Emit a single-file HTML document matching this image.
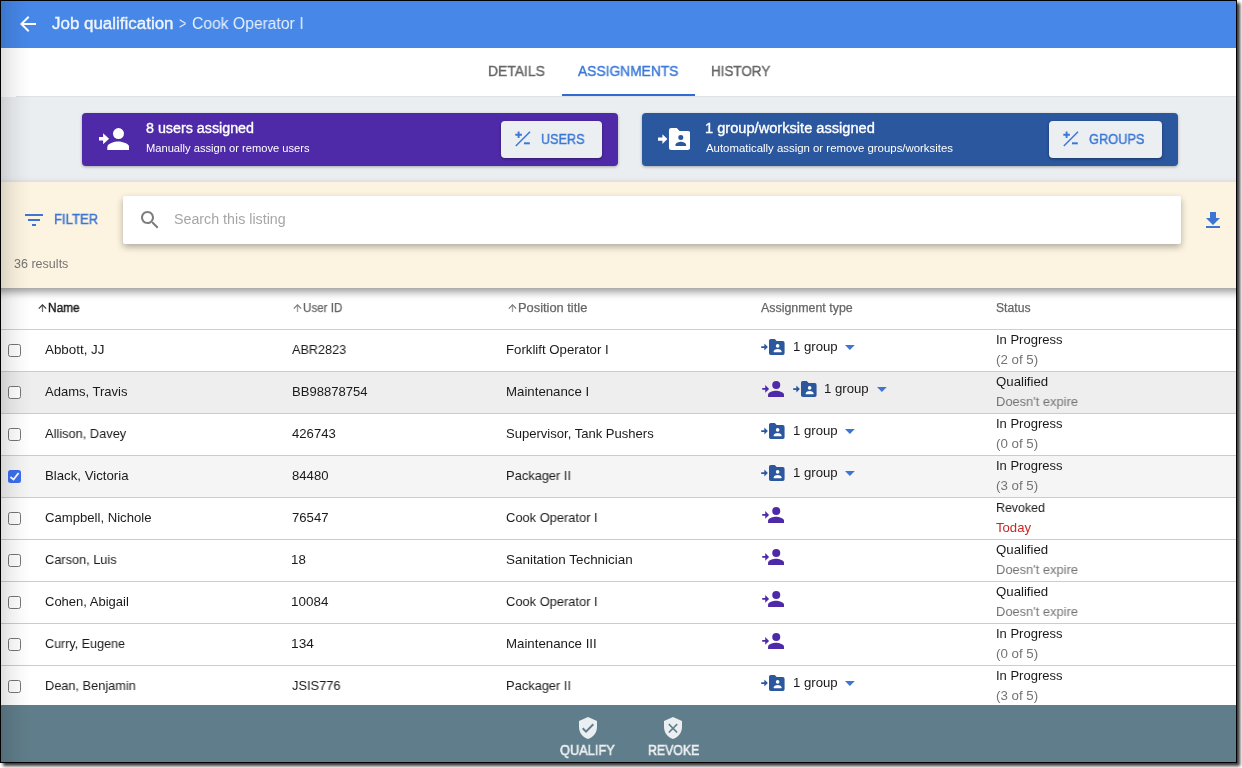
<!DOCTYPE html>
<html><head><meta charset="utf-8"><title>Job qualification</title>
<style>
html,body{margin:0;padding:0;background:#fff;width:1242px;height:768px;overflow:hidden}
body{position:relative;font-family:"Liberation Sans",sans-serif}
.t{position:absolute;white-space:nowrap;margin:0;transform-origin:0 0;will-change:transform}
.r{position:absolute;display:block}
</style></head><body>
<div class="r" style="left:1px;top:1px;width:1235px;height:761px;overflow:hidden"><div class="r" style="left:-1px;top:-1px;width:1242px;height:768px">
<div class="r" style="left:1px;top:1px;width:1235px;height:47px;background:#4687e8;"></div>
<div class="r" style="left:1px;top:48px;width:1235px;height:48px;background:#ffffff;"></div>
<div class="r" style="left:1px;top:96px;width:1235px;height:86px;background:#ebeef0;"></div>
<div class="r" style="left:-20px;top:182px;width:1280px;height:106px;background:#fcf3e0;box-shadow:0 4px 8px rgba(0,0,0,.4);z-index:3"></div>
<svg class="r" style="left:16px;top:12px;" width="24" height="24" viewBox="0 0 24 24"><path fill="#fff" d="M20 11H7.83l5.59-5.59L12 4l-8 8 8 8 1.41-1.41L7.83 13H20v-2z"/></svg>
<div id="h1" class="t" style="left:52px;top:12.00px;font-size:16px;line-height:24px;color:#f0f5fd;font-weight:400;transform:scaleX(1.0588);-webkit-text-stroke:0.35px #f0f5fd;">Job qualification</div>
<div id="h2a" class="t" style="left:179px;top:12.00px;font-size:16px;line-height:24px;color:#e9f0fc;font-weight:400;transform:scaleX(0.7813);">&gt;</div>
<div id="h2" class="t" style="left:191.5px;top:12.00px;font-size:16px;line-height:24px;color:#e9f0fc;font-weight:400;transform:scaleX(0.9795);">Cook Operator I</div>
<div class="r" style="left:1px;top:96px;width:15px;height:1px;background:#ffffff;"></div>
<div class="r" style="left:16px;top:96px;width:1220px;height:1px;background:#dfe1e3;"></div>
<div id="tab1" class="t" style="left:488.4px;top:61.00px;font-size:14px;line-height:21px;color:#666666;font-weight:400;transform:scaleX(0.9911);-webkit-text-stroke:0.4px #666666;">DETAILS</div>
<div id="tab2" class="t" style="left:578.2px;top:61.00px;font-size:14px;line-height:21px;color:#3a78d8;font-weight:400;transform:scaleX(0.9852);-webkit-text-stroke:0.4px #3a78d8;">ASSIGNMENTS</div>
<div id="tab3" class="t" style="left:711.2px;top:61.00px;font-size:14px;line-height:21px;color:#666666;font-weight:400;transform:scaleX(0.9589);-webkit-text-stroke:0.4px #666666;">HISTORY</div>
<div class="r" style="left:562px;top:94px;width:133px;height:2px;background:#2f6bd0;"></div>
<div class="r" style="left:82px;top:113px;width:536px;height:52.5px;background:#4f2aa8;border-radius:4px;box-shadow:0 1px 3px rgba(0,0,0,.3)"></div>
<div class="r" style="left:642px;top:113px;width:536px;height:52.5px;background:#2b579e;border-radius:4px;box-shadow:0 1px 3px rgba(0,0,0,.3)"></div>
<svg class="r" style="left:98.9px;top:127.9px;" width="30.2" height="22.1" viewBox="0 0 30.2 22.1"><g fill="#ffffff"><path d="M0 9h4.1V5.3l6 5.5-6 5.5V12.6H0z"/><circle cx="19.5" cy="5.6" r="5.5"/><path d="M19.25 13.5c-3.66 0-10.95 1.84-10.95 5.5v3.1h21.9V19c0-3.66-7.29-5.500-10.95-5.500z"/></g></svg>
<div id="c1a" class="t" style="left:145.5px;top:118.00px;font-size:14px;line-height:21px;color:#ffffff;font-weight:400;transform:scaleX(1.0204);-webkit-text-stroke:0.35px #ffffff;">8 users assigned</div>
<div id="c1b" class="t" style="left:145.5px;top:140.00px;font-size:11px;line-height:16px;color:#ffffff;font-weight:400;transform:scaleX(1.0130);">Manually assign or remove users</div>
<div class="r" style="left:501px;top:121px;width:101px;height:37px;background:#eceff2;border-radius:4px;box-shadow:0 1px 3px rgba(0,0,0,.4)"></div>
<div id="b1" class="t" style="left:541px;top:129.00px;font-size:14px;line-height:21px;color:#3b77d4;font-weight:400;transform:scaleX(0.9018);-webkit-text-stroke:0.4px #3b77d4;">USERS</div>
<svg class="r" style="left:657.8px;top:127.9px;" width="32.3" height="21.9" viewBox="0 0 32.3 21.9"><g fill="#ffffff"><path d="M0 9.4h4.4V6.200l5 4.850-5 4.850V12.8H0z"/><path d="M13.45 0h5.400l2.600 2.900h8.350a2.500 2.500 0 0 1 2.500 2.500v14a2.500 2.500 0 0 1-2.500 2.500H13.450a2.500 2.500 0 0 1-2.500-2.500V2.500A2.500 2.500 0 0 1 13.450 0z"/></g><g fill="#2b579e"><circle cx="22.8" cy="9.5" r="2.5"/><path d="M17.5 18v-1.200c0-2 3.500-3 5.300-3s5.300 1 5.300 3V18z"/></g></svg>
<div id="c2a" class="t" style="left:705.1px;top:118.00px;font-size:14px;line-height:21px;color:#ffffff;font-weight:400;transform:scaleX(1.0445);-webkit-text-stroke:0.35px #ffffff;">1 group/worksite assigned</div>
<div id="c2b" class="t" style="left:706px;top:140.00px;font-size:11px;line-height:16px;color:#ffffff;font-weight:400;transform:scaleX(1.0359);">Automatically assign or remove groups/worksites</div>
<div class="r" style="left:1049px;top:121px;width:113px;height:37px;background:#eceff2;border-radius:4px;box-shadow:0 1px 3px rgba(0,0,0,.4)"></div>
<div id="b2" class="t" style="left:1089px;top:129.00px;font-size:14px;line-height:21px;color:#3b77d4;font-weight:400;transform:scaleX(0.9145);-webkit-text-stroke:0.4px #3b77d4;">GROUPS</div>
<svg class="r" style="left:514px;top:130px;" width="18" height="18" viewBox="0 0 18 18"><g stroke="#3b77d4" stroke-width="1.7" fill="none"><path stroke-width="1.9" d="M1.3 4.8h6.6M4.6 1.500v6.600"/><path stroke-width="1.5" d="M1.8 16L16 1.700"/><path stroke-width="2" d="M10 13.300h5.800"/></g></svg>
<svg class="r" style="left:1062px;top:130px;" width="18" height="18" viewBox="0 0 18 18"><g stroke="#3b77d4" stroke-width="1.7" fill="none"><path stroke-width="1.9" d="M1.3 4.8h6.6M4.6 1.500v6.600"/><path stroke-width="1.5" d="M1.8 16L16 1.700"/><path stroke-width="2" d="M10 13.300h5.800"/></g></svg>
<div style="position:absolute;z-index:4;left:0;top:0">
<svg class="r" style="left:22px;top:207.5px;" width="24" height="24" viewBox="0 0 24 24"><path fill="#3d75d3" d="M10 18h4v-2h-4v2zM3 6v2h18V6H3zm3 7h12v-2H6v2z"/></svg>
<div id="f1" class="t" style="left:54px;top:209.00px;font-size:14px;line-height:21px;color:#3d75d3;font-weight:400;transform:scaleX(0.9364);-webkit-text-stroke:0.4px #3d75d3;">FILTER</div>
<div class="r" style="left:123px;top:196px;width:1058px;height:47.5px;background:#ffffff;border-radius:2px;box-shadow:0 3px 7px rgba(0,0,0,.3)"></div>
<svg class="r" style="left:137.5px;top:207.5px;" width="24" height="24" viewBox="0 0 24 24"><path fill="#7d7d7d" d="M15.5 14h-.79l-.28-.27C15.41 12.59 16 11.11 16 9.5 16 5.91 13.09 3 9.5 3S3 5.91 3 9.5 5.91 16 9.5 16c1.61 0 3.09-.59 4.23-1.57l.27.28v.79l5 4.99L20.49 19l-4.99-5zm-6 0C7.01 14 5 11.99 5 9.5S7.01 5 9.5 5 14 7.01 14 9.5 11.99 14 9.5 14z"/></svg>
<div id="s1" class="t" style="left:174px;top:209.00px;font-size:14px;line-height:21px;color:#a6a6a6;font-weight:400;transform:scaleX(1.0181);">Search this listing</div>
<svg class="r" style="left:1201px;top:208.5px;" width="24" height="24" viewBox="0 0 24 24"><path fill="#3d75d3" d="M19 9h-4V3H9v6H5l7 7 7-7zM5 17.100v1.900h14v-1.900H5z"/></svg>
<div id="res" class="t" style="left:14.2px;top:255.00px;font-size:12px;line-height:18px;color:#757575;font-weight:400;transform:scaleX(1.0455);">36 results</div>
</div>
<svg class="r" style="left:38.0px;top:303.5px;" width="9" height="9" viewBox="0 0 9 9"><path d="M4.5 1v7" stroke="#333" stroke-width="1.3" stroke-opacity=".7" fill="none"/><path d="M.8 4.6L4.5 .900 8.200 4.600" stroke="#333" stroke-width="1.1" fill="none"/></svg>
<div id="th1" class="t" style="left:48.3px;top:299.00px;font-size:12px;line-height:18px;color:#1a1a1a;font-weight:400;transform:scaleX(0.9870);-webkit-text-stroke:0.4px #1a1a1a;">Name</div>
<svg class="r" style="left:292.5px;top:303.5px;" width="9" height="9" viewBox="0 0 9 9"><path d="M4.5 1v7" stroke="#777" stroke-width="1.3" stroke-opacity=".7" fill="none"/><path d="M.8 4.6L4.5 .900 8.200 4.600" stroke="#777" stroke-width="1.1" fill="none"/></svg>
<div id="th2" class="t" style="left:302.7px;top:299.00px;font-size:12px;line-height:18px;color:#666666;font-weight:400;transform:scaleX(0.9663);-webkit-text-stroke:.25px #666666;">User ID</div>
<svg class="r" style="left:507.5px;top:303.5px;" width="9" height="9" viewBox="0 0 9 9"><path d="M4.5 1v7" stroke="#777" stroke-width="1.3" stroke-opacity=".7" fill="none"/><path d="M.8 4.6L4.5 .900 8.200 4.600" stroke="#777" stroke-width="1.1" fill="none"/></svg>
<div id="th3" class="t" style="left:517.7px;top:299.00px;font-size:12px;line-height:18px;color:#666666;font-weight:400;transform:scaleX(1.0710);-webkit-text-stroke:.25px #666666;">Position title</div>
<div id="th4" class="t" style="left:761px;top:299.00px;font-size:12px;line-height:18px;color:#666666;font-weight:400;transform:scaleX(1.0336);-webkit-text-stroke:.25px #666666;">Assignment type</div>
<div id="th5" class="t" style="left:995.5px;top:299.00px;font-size:12px;line-height:18px;color:#666666;font-weight:400;transform:scaleX(1.0138);-webkit-text-stroke:.25px #666666;">Status</div>
<div class="r" style="left:1px;top:329px;width:1235px;height:1px;background:#cfcfcf;"></div>
<div class="r" style="left:1px;top:371px;width:1235px;height:1px;background:#cccccc;"></div>
<div class="r" style="left:8px;top:344.0px;width:13px;height:13px;box-sizing:border-box;border:1px solid #767676;border-radius:2.5px;background:#fff"></div>
<div id="n0" class="t" style="left:44.8px;top:340.00px;font-size:13px;line-height:20px;color:#1a1a1a;font-weight:400;transform:scaleX(1.0292);">Abbott, JJ</div>
<div id="u0" class="t" style="left:291.5px;top:340.00px;font-size:13px;line-height:20px;color:#1a1a1a;font-weight:400;transform:scaleX(0.9720);">ABR2823</div>
<div id="p0" class="t" style="left:506.3px;top:340.00px;font-size:13px;line-height:20px;color:#1a1a1a;font-weight:400;transform:scaleX(1.0154);">Forklift Operator I</div>
<svg class="r" style="left:761.2px;top:339px;" width="23.58" height="15.99" viewBox="0 0 32.3 21.9"><g fill="#2b579e"><path d="M.3 9.800h4.300V6.200l4.800 4.850-4.800 4.850V12.300H.3z"/><path d="M13.45 0h5.400l2.600 2.900h8.350a2.500 2.500 0 0 1 2.500 2.500v14a2.500 2.500 0 0 1-2.500 2.500H13.450a2.500 2.500 0 0 1-2.500-2.500V2.500A2.500 2.500 0 0 1 13.450 0z"/></g><g fill="#ffffff"><circle cx="22.8" cy="9.5" r="2.5"/><path d="M17.5 18v-1.200c0-2 3.500-3 5.300-3s5.300 1 5.300 3V18z"/></g></svg>
<div id="g0" class="t" style="left:792.6px;top:337.00px;font-size:13px;line-height:20px;color:#1a1a1a;font-weight:400;transform:scaleX(1.0137);">1 group</div>
<svg class="r" style="left:845.4px;top:345px;" width="9.8" height="4.9" viewBox="0 0 10 5"><path fill="#3d75d3" d="M0 0l5 5 5-5z"/></svg>
<div id="sa0" class="t" style="left:996px;top:330.00px;font-size:13px;line-height:20px;color:#1a1a1a;font-weight:400;transform:scaleX(0.9987);">In Progress</div>
<div id="sb0" class="t" style="left:996px;top:350.00px;font-size:13px;line-height:20px;color:#747474;font-weight:400;transform:scaleX(1.0246);">(2 of 5)</div>
<div class="r" style="left:1px;top:372px;width:1235px;height:41px;background:#eeeeee;"></div>
<div class="r" style="left:1px;top:413px;width:1235px;height:1px;background:#cccccc;"></div>
<div class="r" style="left:8px;top:386.0px;width:13px;height:13px;box-sizing:border-box;border:1px solid #767676;border-radius:2.5px;background:#fff"></div>
<div id="n1" class="t" style="left:44.8px;top:382.00px;font-size:13px;line-height:20px;color:#1a1a1a;font-weight:400;transform:scaleX(1.0005);">Adams, Travis</div>
<div id="u1" class="t" style="left:291.5px;top:382.00px;font-size:13px;line-height:20px;color:#1a1a1a;font-weight:400;transform:scaleX(1.0042);">BB98878754</div>
<div id="p1" class="t" style="left:506.3px;top:382.00px;font-size:13px;line-height:20px;color:#1a1a1a;font-weight:400;transform:scaleX(1.0187);">Maintenance I</div>
<svg class="r" style="left:761.8px;top:381px;" width="22.05" height="16.13" viewBox="0 0 30.2 22.1"><g fill="#4f2aa8"><path d="M.3 9.550h4.100V5.600l5.300 5.200-5.300 5.200V12.050H.3z"/><circle cx="19.5" cy="5.6" r="5.5"/><path d="M19.25 13.5c-3.66 0-10.95 1.84-10.95 5.5v3.1h21.9V19c0-3.66-7.29-5.500-10.95-5.500z"/></g></svg>
<svg class="r" style="left:793.1px;top:381px;" width="23.58" height="15.99" viewBox="0 0 32.3 21.9"><g fill="#2b579e"><path d="M.3 9.800h4.300V6.200l4.800 4.850-4.800 4.850V12.300H.3z"/><path d="M13.45 0h5.400l2.600 2.900h8.350a2.500 2.500 0 0 1 2.500 2.500v14a2.500 2.500 0 0 1-2.500 2.500H13.450a2.500 2.500 0 0 1-2.500-2.500V2.500A2.500 2.500 0 0 1 13.450 0z"/></g><g fill="#ffffff"><circle cx="22.8" cy="9.5" r="2.5"/><path d="M17.5 18v-1.200c0-2 3.500-3 5.300-3s5.300 1 5.300 3V18z"/></g></svg>
<div id="g1" class="t" style="left:824.1px;top:379.00px;font-size:13px;line-height:20px;color:#1a1a1a;font-weight:400;transform:scaleX(1.0137);">1 group</div>
<svg class="r" style="left:877.2px;top:387px;" width="9.8" height="4.9" viewBox="0 0 10 5"><path fill="#3d75d3" d="M0 0l5 5 5-5z"/></svg>
<div id="sa1" class="t" style="left:996px;top:372.00px;font-size:13px;line-height:20px;color:#1a1a1a;font-weight:400;transform:scaleX(1.0173);">Qualified</div>
<div id="sb1" class="t" style="left:996px;top:392.00px;font-size:13px;line-height:20px;color:#747474;font-weight:400;transform:scaleX(0.9915);">Doesn't expire</div>
<div class="r" style="left:1px;top:455px;width:1235px;height:1px;background:#cccccc;"></div>
<div class="r" style="left:8px;top:428.0px;width:13px;height:13px;box-sizing:border-box;border:1px solid #767676;border-radius:2.5px;background:#fff"></div>
<div id="n2" class="t" style="left:44.8px;top:424.00px;font-size:13px;line-height:20px;color:#1a1a1a;font-weight:400;transform:scaleX(0.9857);">Allison, Davey</div>
<div id="u2" class="t" style="left:291.5px;top:424.00px;font-size:13px;line-height:20px;color:#1a1a1a;font-weight:400;transform:scaleX(1.0094);">426743</div>
<div id="p2" class="t" style="left:506.3px;top:424.00px;font-size:13px;line-height:20px;color:#1a1a1a;font-weight:400;transform:scaleX(1.0036);">Supervisor, Tank Pushers</div>
<svg class="r" style="left:761.2px;top:423px;" width="23.58" height="15.99" viewBox="0 0 32.3 21.9"><g fill="#2b579e"><path d="M.3 9.800h4.300V6.200l4.800 4.850-4.800 4.850V12.300H.3z"/><path d="M13.45 0h5.400l2.600 2.900h8.350a2.500 2.500 0 0 1 2.500 2.500v14a2.500 2.500 0 0 1-2.500 2.500H13.450a2.500 2.500 0 0 1-2.500-2.500V2.500A2.500 2.500 0 0 1 13.450 0z"/></g><g fill="#ffffff"><circle cx="22.8" cy="9.5" r="2.5"/><path d="M17.5 18v-1.200c0-2 3.500-3 5.300-3s5.300 1 5.300 3V18z"/></g></svg>
<div id="g2" class="t" style="left:792.6px;top:421.00px;font-size:13px;line-height:20px;color:#1a1a1a;font-weight:400;transform:scaleX(1.0137);">1 group</div>
<svg class="r" style="left:845.4px;top:429px;" width="9.8" height="4.9" viewBox="0 0 10 5"><path fill="#3d75d3" d="M0 0l5 5 5-5z"/></svg>
<div id="sa2" class="t" style="left:996px;top:414.00px;font-size:13px;line-height:20px;color:#1a1a1a;font-weight:400;transform:scaleX(0.9987);">In Progress</div>
<div id="sb2" class="t" style="left:996px;top:434.00px;font-size:13px;line-height:20px;color:#747474;font-weight:400;transform:scaleX(1.0246);">(0 of 5)</div>
<div class="r" style="left:1px;top:456px;width:1235px;height:41px;background:#f5f5f5;"></div>
<div class="r" style="left:1px;top:497px;width:1235px;height:1px;background:#cccccc;"></div>
<div class="r" style="left:8px;top:470.0px;width:13px;height:13px;background:#3d6ff0;border-radius:2.5px"></div>
<svg class="r" style="left:8px;top:470.0px;" width="13" height="13" viewBox="0 0 13 13"><path d="M2.4 7l3.100 2.500L10.600 3" stroke="#fff" stroke-width="1.9" fill="none"/></svg>
<div id="n3" class="t" style="left:44.8px;top:466.00px;font-size:13px;line-height:20px;color:#1a1a1a;font-weight:400;transform:scaleX(1.0165);">Black, Victoria</div>
<div id="u3" class="t" style="left:291.5px;top:466.00px;font-size:13px;line-height:20px;color:#1a1a1a;font-weight:400;transform:scaleX(1.0095);">84480</div>
<div id="p3" class="t" style="left:506.3px;top:466.00px;font-size:13px;line-height:20px;color:#1a1a1a;font-weight:400;transform:scaleX(0.9884);">Packager II</div>
<svg class="r" style="left:761.2px;top:465px;" width="23.58" height="15.99" viewBox="0 0 32.3 21.9"><g fill="#2b579e"><path d="M.3 9.800h4.300V6.200l4.800 4.850-4.800 4.850V12.300H.3z"/><path d="M13.45 0h5.400l2.600 2.900h8.350a2.500 2.500 0 0 1 2.500 2.500v14a2.500 2.500 0 0 1-2.500 2.500H13.450a2.500 2.500 0 0 1-2.500-2.500V2.500A2.500 2.500 0 0 1 13.450 0z"/></g><g fill="#ffffff"><circle cx="22.8" cy="9.5" r="2.5"/><path d="M17.5 18v-1.200c0-2 3.500-3 5.300-3s5.300 1 5.300 3V18z"/></g></svg>
<div id="g3" class="t" style="left:792.6px;top:463.00px;font-size:13px;line-height:20px;color:#1a1a1a;font-weight:400;transform:scaleX(1.0137);">1 group</div>
<svg class="r" style="left:845.4px;top:471px;" width="9.8" height="4.9" viewBox="0 0 10 5"><path fill="#3d75d3" d="M0 0l5 5 5-5z"/></svg>
<div id="sa3" class="t" style="left:996px;top:456.00px;font-size:13px;line-height:20px;color:#1a1a1a;font-weight:400;transform:scaleX(0.9987);">In Progress</div>
<div id="sb3" class="t" style="left:996px;top:476.00px;font-size:13px;line-height:20px;color:#747474;font-weight:400;transform:scaleX(1.0246);">(3 of 5)</div>
<div class="r" style="left:1px;top:539px;width:1235px;height:1px;background:#cccccc;"></div>
<div class="r" style="left:8px;top:512.0px;width:13px;height:13px;box-sizing:border-box;border:1px solid #767676;border-radius:2.5px;background:#fff"></div>
<div id="n4" class="t" style="left:44.8px;top:508.00px;font-size:13px;line-height:20px;color:#1a1a1a;font-weight:400;transform:scaleX(1.0095);">Campbell, Nichole</div>
<div id="u4" class="t" style="left:291.5px;top:508.00px;font-size:13px;line-height:20px;color:#1a1a1a;font-weight:400;transform:scaleX(1.0095);">76547</div>
<div id="p4" class="t" style="left:506.3px;top:508.00px;font-size:13px;line-height:20px;color:#1a1a1a;font-weight:400;transform:scaleX(0.9914);">Cook Operator I</div>
<svg class="r" style="left:761.8px;top:507px;" width="22.05" height="16.13" viewBox="0 0 30.2 22.1"><g fill="#4f2aa8"><path d="M.3 9.550h4.100V5.600l5.300 5.200-5.300 5.200V12.050H.3z"/><circle cx="19.5" cy="5.6" r="5.5"/><path d="M19.25 13.5c-3.66 0-10.95 1.84-10.95 5.5v3.1h21.9V19c0-3.66-7.29-5.500-10.95-5.500z"/></g></svg>
<div id="sa4" class="t" style="left:996px;top:498.00px;font-size:13px;line-height:20px;color:#1a1a1a;font-weight:400;transform:scaleX(0.9549);">Revoked</div>
<div id="sb4" class="t" style="left:996px;top:518.00px;font-size:13px;line-height:20px;color:#c62828;font-weight:400;transform:scaleX(1.0086);">Today</div>
<div class="r" style="left:1px;top:581px;width:1235px;height:1px;background:#cccccc;"></div>
<div class="r" style="left:8px;top:554.0px;width:13px;height:13px;box-sizing:border-box;border:1px solid #767676;border-radius:2.5px;background:#fff"></div>
<div id="n5" class="t" style="left:44.8px;top:550.00px;font-size:13px;line-height:20px;color:#1a1a1a;font-weight:400;transform:scaleX(0.9810);">Carson, Luis</div>
<div id="u5" class="t" style="left:290.6px;top:550.00px;font-size:13px;line-height:20px;color:#1a1a1a;font-weight:400;transform:scaleX(1.0229);">18</div>
<div id="p5" class="t" style="left:506.3px;top:550.00px;font-size:13px;line-height:20px;color:#1a1a1a;font-weight:400;transform:scaleX(1.0332);">Sanitation Technician</div>
<svg class="r" style="left:761.8px;top:549px;" width="22.05" height="16.13" viewBox="0 0 30.2 22.1"><g fill="#4f2aa8"><path d="M.3 9.550h4.100V5.600l5.300 5.200-5.300 5.200V12.050H.3z"/><circle cx="19.5" cy="5.6" r="5.5"/><path d="M19.25 13.5c-3.66 0-10.95 1.84-10.95 5.5v3.1h21.9V19c0-3.66-7.29-5.500-10.95-5.500z"/></g></svg>
<div id="sa5" class="t" style="left:996px;top:540.00px;font-size:13px;line-height:20px;color:#1a1a1a;font-weight:400;transform:scaleX(1.0173);">Qualified</div>
<div id="sb5" class="t" style="left:996px;top:560.00px;font-size:13px;line-height:20px;color:#747474;font-weight:400;transform:scaleX(0.9915);">Doesn't expire</div>
<div class="r" style="left:1px;top:623px;width:1235px;height:1px;background:#cccccc;"></div>
<div class="r" style="left:8px;top:596.0px;width:13px;height:13px;box-sizing:border-box;border:1px solid #767676;border-radius:2.5px;background:#fff"></div>
<div id="n6" class="t" style="left:44.8px;top:592.00px;font-size:13px;line-height:20px;color:#1a1a1a;font-weight:400;transform:scaleX(0.9995);">Cohen, Abigail</div>
<div id="u6" class="t" style="left:290.6px;top:592.00px;font-size:13px;line-height:20px;color:#1a1a1a;font-weight:400;transform:scaleX(1.0344);">10084</div>
<div id="p6" class="t" style="left:506.3px;top:592.00px;font-size:13px;line-height:20px;color:#1a1a1a;font-weight:400;transform:scaleX(0.9914);">Cook Operator I</div>
<svg class="r" style="left:761.8px;top:591px;" width="22.05" height="16.13" viewBox="0 0 30.2 22.1"><g fill="#4f2aa8"><path d="M.3 9.550h4.100V5.600l5.300 5.200-5.300 5.200V12.050H.3z"/><circle cx="19.5" cy="5.6" r="5.5"/><path d="M19.25 13.5c-3.66 0-10.95 1.84-10.95 5.5v3.1h21.9V19c0-3.66-7.29-5.500-10.95-5.500z"/></g></svg>
<div id="sa6" class="t" style="left:996px;top:582.00px;font-size:13px;line-height:20px;color:#1a1a1a;font-weight:400;transform:scaleX(1.0173);">Qualified</div>
<div id="sb6" class="t" style="left:996px;top:602.00px;font-size:13px;line-height:20px;color:#747474;font-weight:400;transform:scaleX(0.9915);">Doesn't expire</div>
<div class="r" style="left:1px;top:665px;width:1235px;height:1px;background:#cccccc;"></div>
<div class="r" style="left:8px;top:638.0px;width:13px;height:13px;box-sizing:border-box;border:1px solid #767676;border-radius:2.5px;background:#fff"></div>
<div id="n7" class="t" style="left:44.8px;top:634.00px;font-size:13px;line-height:20px;color:#1a1a1a;font-weight:400;transform:scaleX(0.9643);">Curry, Eugene</div>
<div id="u7" class="t" style="left:290.6px;top:634.00px;font-size:13px;line-height:20px;color:#1a1a1a;font-weight:400;transform:scaleX(1.0551);">134</div>
<div id="p7" class="t" style="left:506.3px;top:634.00px;font-size:13px;line-height:20px;color:#1a1a1a;font-weight:400;transform:scaleX(1.0204);">Maintenance III</div>
<svg class="r" style="left:761.8px;top:633px;" width="22.05" height="16.13" viewBox="0 0 30.2 22.1"><g fill="#4f2aa8"><path d="M.3 9.550h4.100V5.600l5.300 5.200-5.300 5.200V12.050H.3z"/><circle cx="19.5" cy="5.6" r="5.5"/><path d="M19.25 13.5c-3.66 0-10.95 1.84-10.95 5.5v3.1h21.9V19c0-3.66-7.29-5.500-10.95-5.500z"/></g></svg>
<div id="sa7" class="t" style="left:996px;top:624.00px;font-size:13px;line-height:20px;color:#1a1a1a;font-weight:400;transform:scaleX(0.9987);">In Progress</div>
<div id="sb7" class="t" style="left:996px;top:644.00px;font-size:13px;line-height:20px;color:#747474;font-weight:400;transform:scaleX(1.0246);">(0 of 5)</div>
<div class="r" style="left:1px;top:707px;width:1235px;height:1px;background:#cccccc;"></div>
<div class="r" style="left:8px;top:680.0px;width:13px;height:13px;box-sizing:border-box;border:1px solid #767676;border-radius:2.5px;background:#fff"></div>
<div id="n8" class="t" style="left:44.8px;top:676.00px;font-size:13px;line-height:20px;color:#1a1a1a;font-weight:400;transform:scaleX(0.9816);">Dean, Benjamin</div>
<div id="u8" class="t" style="left:291.5px;top:676.00px;font-size:13px;line-height:20px;color:#1a1a1a;font-weight:400;transform:scaleX(0.9866);">JSIS776</div>
<div id="p8" class="t" style="left:506.3px;top:676.00px;font-size:13px;line-height:20px;color:#1a1a1a;font-weight:400;transform:scaleX(0.9884);">Packager II</div>
<svg class="r" style="left:761.2px;top:675px;" width="23.58" height="15.99" viewBox="0 0 32.3 21.9"><g fill="#2b579e"><path d="M.3 9.800h4.300V6.200l4.800 4.850-4.800 4.850V12.300H.3z"/><path d="M13.45 0h5.400l2.600 2.900h8.350a2.500 2.500 0 0 1 2.500 2.500v14a2.500 2.500 0 0 1-2.500 2.500H13.450a2.500 2.500 0 0 1-2.500-2.500V2.500A2.500 2.500 0 0 1 13.450 0z"/></g><g fill="#ffffff"><circle cx="22.8" cy="9.5" r="2.5"/><path d="M17.5 18v-1.200c0-2 3.500-3 5.300-3s5.300 1 5.300 3V18z"/></g></svg>
<div id="g8" class="t" style="left:792.6px;top:673.00px;font-size:13px;line-height:20px;color:#1a1a1a;font-weight:400;transform:scaleX(1.0137);">1 group</div>
<svg class="r" style="left:845.4px;top:681px;" width="9.8" height="4.9" viewBox="0 0 10 5"><path fill="#3d75d3" d="M0 0l5 5 5-5z"/></svg>
<div id="sa8" class="t" style="left:996px;top:666.00px;font-size:13px;line-height:20px;color:#1a1a1a;font-weight:400;transform:scaleX(0.9987);">In Progress</div>
<div id="sb8" class="t" style="left:996px;top:686.00px;font-size:13px;line-height:20px;color:#747474;font-weight:400;transform:scaleX(1.0246);">(3 of 5)</div>
<div class="r" style="left:1px;top:705px;width:1235px;height:57px;background:#607d8b;z-index:5"></div>
<div style="position:absolute;z-index:6;left:0;top:0">
<svg class="r" style="left:576px;top:715.8px;" width="24" height="24" viewBox="0 0 24 24"><path fill="#eceff1" d="M12 1L3 5v6c0 5.55 3.84 10.74 9 12 5.16-1.26 9-6.45 9-12V5l-9-4zm-2 16l-4-4 1.41-1.41L10 14.17l6.59-6.59L18 9l-8 8z"/></svg>
<div id="q1" class="t" style="left:559.9px;top:740.00px;font-size:14px;line-height:21px;color:#eceff1;font-weight:400;transform:scaleX(0.9148);-webkit-text-stroke:0.6px #eceff1;">QUALIFY</div>
<svg class="r" style="left:661px;top:715.8px;" width="24" height="24" viewBox="0 0 24 24"><path fill="#eceff1" fill-rule="evenodd" d="M12 1L3 5v6c0 5.55 3.840 10.740 9 12 5.160-1.260 9-6.450 9-12V5l-9-4zM15.61 7.56L16.74 8.69L13.13 12.30L16.74 15.91L15.61 17.04L12.00 13.43L8.39 17.04L7.26 15.91L10.87 12.30L7.26 8.69L8.39 7.56L12.00 11.17z"/></svg>
<div id="q2" class="t" style="left:647.8px;top:740.00px;font-size:14px;line-height:21px;color:#eceff1;font-weight:400;transform:scaleX(0.8790);-webkit-text-stroke:0.6px #eceff1;">REVOKE</div>
</div>
</div></div>
<div class="r" style="left:1px;top:1px;width:30px;height:761px;z-index:9;background:linear-gradient(to right,rgba(0,0,0,.125) 0,rgba(0,0,0,.06) 35%,rgba(0,0,0,.02) 70%,rgba(0,0,0,0) 100%)"></div>
<div class="r" style="left:0;top:0;width:1237px;height:763px;box-sizing:border-box;border:1px solid #000;z-index:10;box-shadow:3px 3px 3px rgba(0,0,0,.78)"></div>
</body></html>
